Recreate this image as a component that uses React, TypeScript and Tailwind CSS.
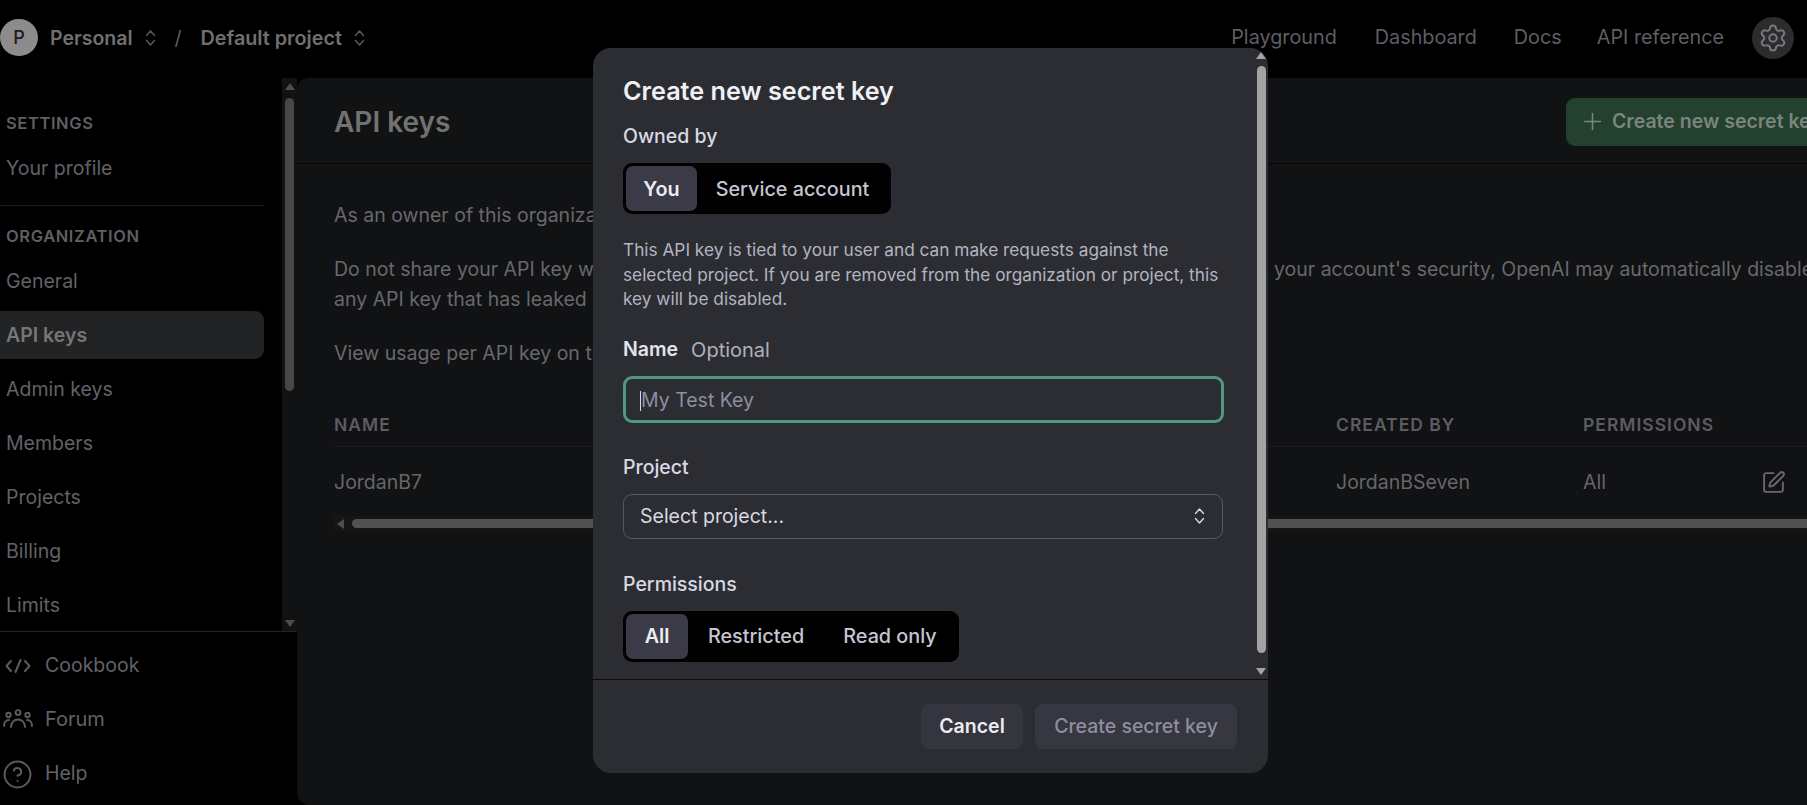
import { CircleHelp, Plus, Settings, SquarePen } from "lucide-react";

function Updown({ className }: { className: string }) {
  return (
    <svg viewBox="0 0 12 20" className={className} fill="none" stroke="currentColor" strokeWidth="1.4" strokeLinecap="round" strokeLinejoin="round">
      <path d="M2 7.5 6 3l4 4.5" />
      <path d="M2 12.5 6 17l4-4.5" />
    </svg>
  );
}

function CodeIcon() {
  return (
    <svg viewBox="0 0 26 18" className="h-[18px] w-[26px]" fill="none" stroke="currentColor" strokeWidth="2" strokeLinecap="round" strokeLinejoin="round">
      <path d="M6 4 1.5 9 6 14" />
      <path d="M20 4l4.5 5-4.5 5" />
      <path d="M15.5 3 10.5 15" />
    </svg>
  );
}

function ForumIcon() {
  return (
    <svg viewBox="0 0 30 20" className="h-[20px] w-[30px]" fill="none" stroke="currentColor" strokeWidth="1.9" strokeLinecap="round">
      <circle cx="15" cy="3.5" r="2.4" />
      <circle cx="5.5" cy="6" r="2.2" />
      <circle cx="24.5" cy="6" r="2.2" />
      <path d="M8 18c0-4.5 3-7.5 7-7.5s7 3 7 7.5" />
      <path d="M1 17c0-3.5 2-6 5-6" />
      <path d="M29 17c0-3.5-2-6-5-6" />
    </svg>
  );
}

const navOrg = ["General", "API keys", "Admin keys", "Members", "Projects", "Billing", "Limits"];

function Segmented({ items, activeWidth, itemClass }: { items: string[]; activeWidth: string; itemClass: string[] }) {
  return (
    <div className="mt-[15px] flex h-[51px] w-fit items-stretch rounded-[9px] bg-black p-[3px] text-[19.8px] font-medium">
      {items.map((item, i) =>
        i === 0 ? (
          <div key={item} className={`flex items-center justify-center rounded-[7px] bg-[#3a3b46] pt-[2px] font-semibold text-[#ececf1] ${activeWidth}`}>
            {item}
          </div>
        ) : (
          <div key={item} className={`flex items-center justify-center pt-[2px] text-[#c5c5d2] ${itemClass[i]}`}>
            {item}
          </div>
        )
      )}
    </div>
  );
}

export default function App() {
  return (
    <div className="relative flex h-[805px] w-[1807px] flex-col overflow-hidden bg-black font-['Inter',sans-serif] text-[19.5px] text-[#626268]">
      <header className="flex h-[78px] shrink-0 items-center justify-between pb-[3px] pr-[13px]">
        <div className="flex items-center">
          <div className="flex h-[37px] w-[38px] items-center justify-center rounded-full bg-[#8c8c8c] text-[18px] font-medium text-[#1b1b1b]">P</div>
          <span className="ml-[12px] pt-[2px] font-semibold text-[#707070]">Personal</span>
          <Updown className="ml-[11px] h-[20px] w-[13px] text-[#5c5c5c]" />
          <span className="ml-[18px] pt-[2px] text-[#5f5f5f]">/</span>
          <span className="ml-[19px] pt-[2px] text-[19.8px] font-semibold text-[#707070]">Default project</span>
          <Updown className="ml-[11px] h-[20px] w-[13px] text-[#5c5c5c]" />
        </div>
        <nav className="flex items-center text-[19.8px] text-[#5e5e64]">
          <span className="pt-[1px]">Playground</span>
          <span className="ml-[38px] pt-[1px]">Dashboard</span>
          <span className="ml-[37px] pt-[1px]">Docs</span>
          <span className="ml-[35px] pt-[1px]">API reference</span>
          <div className="ml-[28px] flex h-[42px] w-[42px] items-center justify-center rounded-full bg-[#2c2c2e]">
            <Settings className="h-[30px] w-[30px] text-[#77777c]" strokeWidth={1.6} />
          </div>
        </nav>
      </header>

      <div className="flex min-h-0 flex-1">
        <aside className="flex w-[297px] shrink-0 flex-col">
          <div className="flex h-[554px] shrink-0 border-b border-[#242426]">
            <nav className="w-[282px] shrink-0 overflow-hidden pr-[18px] pt-[35px]">
              <div className="h-[20px] pl-[6px] text-[16.5px] font-semibold leading-[20px] tracking-[0.6px] text-[#5f5f64]">SETTINGS</div>
              <div className="mt-[11px] flex h-[48px] items-center pl-[6px] pt-[2px]">Your profile</div>
              <div className="mt-[13px] h-px bg-[#1b1b1d]" />
              <div className="mt-[20px] h-[20px] pl-[6px] text-[16.5px] font-semibold leading-[20px] tracking-[0.6px] text-[#5f5f64]">ORGANIZATION</div>
              <div className="mt-[11px] flex flex-col gap-[6px]">
                {navOrg.map((item) => (
                  <div
                    key={item}
                    className={
                      item === "API keys"
                        ? "flex h-[48px] items-center rounded-r-[9px] bg-[#222325] pl-[6px] pt-[2px] font-semibold text-[#767676]"
                        : "flex h-[48px] items-center pl-[6px] pt-[2px]"
                    }
                  >
                    {item}
                  </div>
                ))}
              </div>
            </nav>
            <div className="flex w-[15px] shrink-0 flex-col items-center bg-[#111213] pt-[5px]">
              <div className="h-0 w-0 border-x-[5px] border-b-[7px] border-x-transparent border-b-[#4d4d4d]" />
              <div className="mt-[8px] h-[293px] w-[9px] rounded-full bg-[#474747]" />
              <div className="mt-auto mb-[4px] h-0 w-0 border-x-[5px] border-t-[7px] border-x-transparent border-t-[#4d4d4d]" />
            </div>
          </div>
          <div className="flex h-[54px] items-center pt-[14px]">
            <span className="ml-[5px] flex w-[40px] text-[#5b5b60]"><CodeIcon /></span>
            <span>Cookbook</span>
          </div>
          <div className="mt-[6px] flex h-[54px] items-center">
            <span className="ml-[3px] flex w-[42px] text-[#5b5b60]"><ForumIcon /></span>
            <span className="text-[20px]">Forum</span>
          </div>
          <div className="flex h-[54px] items-center pt-[2px]">
            <span className="flex w-[45px] pl-[2px] text-[#5b5b60]"><CircleHelp className="h-[31px] w-[31px]" strokeWidth={1.5} /></span>
            <span>Help</span>
          </div>
        </aside>

        <main className="min-w-0 flex-1 overflow-hidden rounded-l-[12px] bg-[#111213]">
          <div className="flex h-[86px] items-center justify-between border-b border-[#060606] pl-[37px] pt-[2px]">
            <h1 className="text-[28px] font-semibold text-[#727272]">API keys</h1>
            <div className="flex h-[48px] w-[241px] shrink-0 items-center overflow-hidden whitespace-nowrap rounded-l-[9px] bg-[#24402f] pl-[13px] font-semibold text-[#7a857e]">
              <Plus className="mr-[6px] h-[27px] w-[27px] shrink-0" strokeWidth={1.4} />
              Create new secret key
            </div>
          </div>
          <div className="pl-[37px] pt-[36px] leading-[30px] text-[#68686d]">
            <p className="whitespace-nowrap">As an owner of this organization, you can view and manage all API keys in this organization.</p>
            <p className="mt-[24px] whitespace-nowrap">
              Do not share your API key with others or expose it in the browser or other client-side code. To protect your account's security, OpenAI may automatically disable
              <br />
              any API key that has leaked publicly.
            </p>
            <p className="mt-[24px] whitespace-nowrap">View usage per API key on the Usage page.</p>
          </div>
          <div className="ml-[37px] mt-[41px]">
            <div className="grid h-[38px] grid-cols-[1002px_247px_1fr] items-start border-b border-[#1c1c1e] pt-[6px] text-[17.5px] font-semibold leading-[20px] tracking-[1px] text-[#5c5c62]">
              <span>NAME</span>
              <span>CREATED BY</span>
              <span>PERMISSIONS</span>
            </div>
            <div className="grid h-[69px] grid-cols-[1002px_247px_178px_1fr] items-center pt-[2px] text-[#66666b]">
              <span>JordanB7</span>
              <span>JordanBSeven</span>
              <span>All</span>
              <SquarePen className="h-[25px] w-[25px] text-[#69696e]" strokeWidth={1.8} />
            </div>
            <div className="flex h-[15px] items-center bg-[#161617] pl-[3px]">
              <div className="h-0 w-0 border-y-[5px] border-r-[7px] border-y-transparent border-r-[#4d4d4d]" />
              <div className="ml-[8px] h-[9px] flex-1 rounded-l-full bg-[#525252]" />
            </div>
          </div>
        </main>
      </div>

      <div role="dialog" className="absolute left-[593px] top-[48px] flex h-[725px] w-[675px] flex-col overflow-hidden rounded-[18px] bg-[#2b2d33]">
        <div className="relative h-[632px] shrink-0 border-b border-[#0d0d0f] pl-[30px] pt-[27px]">
          <h2 className="h-[32px] text-[25.2px] font-semibold leading-[32px] text-[#f0f0f4]">Create new secret key</h2>
          <div className="mt-[17px] h-[24px] font-medium leading-[24px] text-[#d9d9e3]">Owned by</div>
          <Segmented items={["You", "Service account"]} activeWidth="w-[71px]" itemClass={["", "w-[191px]"]} />
          <p className="mt-[24px] w-[610px] text-[17.25px] leading-[24.5px] text-[#b4b4c0]">
            This API key is tied to your user and can make requests against the selected project. If you are removed from the organization or project, this key will be disabled.
          </p>
          <div className="mt-[26px] flex h-[24px] items-center">
            <span className="font-semibold text-[#e3e3ea]">Name</span>
            <span className="ml-[13px] text-[20px] text-[#b0b0bc]">Optional</span>
          </div>
          <div className="mt-[14px] flex h-[47px] w-[601px] items-center rounded-[9px] border-[3px] border-[#4f9a7e] pl-[15px] pt-[3px] text-[#8e8ea0]">
            <span className="-ml-px h-[20px] w-px bg-[#d9d9e3]" />
            My Test Key
          </div>
          <div className="mt-[32px] h-[24px] font-medium leading-[24px] text-[#d9d9e3]">Project</div>
          <div className="mt-[15px] flex h-[45px] w-[600px] items-center justify-between rounded-[9px] border border-[#565665] pl-[16px] pr-[16px] text-[#d9d9e3]">
            <span className="pt-[2px]">Select project...</span>
            <Updown className="h-[20px] w-[13px] text-[#d9d9e3]" />
          </div>
          <div className="mt-[33px] h-[24px] font-medium leading-[24px] text-[#d9d9e3]">Permissions</div>
          <Segmented items={["All", "Restricted", "Read only"]} activeWidth="w-[62px]" itemClass={["", "w-[136px]", "w-[132px]"]} />

          <div className="absolute bottom-[4px] right-[2px] top-[4px] flex w-[10px] flex-col items-center">
            <div className="h-0 w-0 border-x-[5px] border-b-[7px] border-x-transparent border-b-[#a3a3a3]" />
            <div className="mt-[7px] h-[587px] w-[9px] rounded-full bg-[#a3a3a3]" />
            <div className="mt-auto h-0 w-0 border-x-[5px] border-t-[7px] border-x-transparent border-t-[#a3a3a3]" />
          </div>
        </div>
        <div className="flex flex-1 justify-end gap-[12px] pr-[31px] pt-[24px]">
          <div className="flex h-[45px] w-[102px] items-center justify-center rounded-[8px] bg-[#34353e] pt-[1px] font-semibold text-[#ececf1]">Cancel</div>
          <div className="flex h-[45px] w-[202px] items-center justify-center rounded-[8px] bg-[#363741] pt-[1px] font-medium text-[#8e8ea0]">Create secret key</div>
        </div>
      </div>
    </div>
  );
}
